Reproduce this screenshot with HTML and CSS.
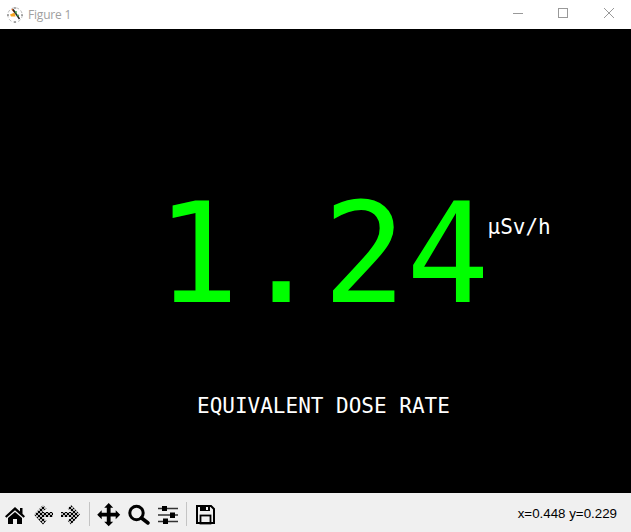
FILE: index.html
```html
<!DOCTYPE html>
<html lang="en">
<head>
<meta charset="utf-8">
<title>Figure 1</title>
<link rel="stylesheet" href="styles.css">
</head>
<body>
<div class="window">
  <header class="titlebar">
    <svg class="app-icon" viewBox="0 0 16 16" width="16" height="16">
      <circle cx="8" cy="8" r="7.2" fill="none" stroke="#bbb" stroke-width="1" stroke-dasharray="3 2"/>
      <path d="M8 0 V2 M8 14 V16 M0 8 H2 M14 8 H16" stroke="#666" stroke-width="1"/>
      <path d="M3 7.5 L7.5 5.5 L8.5 9.5 L4 9.5 Z" fill="#f5a623"/>
      <path d="M5 2 L7.5 5" stroke="#e8641c" stroke-width="1.6"/>
      <path d="M6 2.5 L12.5 12" stroke="#222" stroke-width="1.5"/>
      <path d="M9 4 V6.5" stroke="#3fa34d" stroke-width="1.4"/>
      <path d="M10 9 L12 8" stroke="#3fa34d" stroke-width="1.2"/>
    </svg>
    <span class="title">Figure 1</span>
    <div class="controls">
      <svg class="ctl" viewBox="0 0 45 29" width="45" height="29"><path d="M17 13.5 H27" stroke="#999" fill="none"/></svg>
      <svg class="ctl" viewBox="0 0 45 29" width="45" height="29"><rect x="17.5" y="8.5" width="9" height="9" stroke="#999" fill="none"/></svg>
      <svg class="ctl" viewBox="0 0 45 29" width="45" height="29"><path d="M18 8 L28 18 M28 8 L18 18" stroke="#999" fill="none"/></svg>
    </div>
  </header>
  <main class="canvas">
    <div class="reading">
      <span class="value">1.24</span>
      <span class="unit">µSv/h</span>
    </div>
    <div class="label">EQUIVALENT DOSE RATE</div>
  </main>
  <footer class="toolbar">
    <div class="tools nav">
      <svg class="tool" viewBox="0 0 24 24" width="24" height="24"><path d="M12 4 L17 8.5 V5 H19.5 V10.8 L22 13.3 L20.6 14.8 L12 7.3 L3.4 14.8 L2 13.3 Z M12 9 L19 15 V21 H14 V16 H10 V21 H5 V15 Z" fill="#000"/></svg>
      <svg class="tool" viewBox="0 0 24 24" width="24" height="24">
        <defs><pattern id="dither" width="4" height="4" patternUnits="userSpaceOnUse"><rect width="4" height="4" fill="#bbb"/><rect width="2" height="2" fill="#000"/><rect x="2" y="2" width="2" height="2" fill="#000"/></pattern></defs>
        <path d="M4 11.5 L13 2 L16.5 5.5 L12 9 H23 V14 H12 L16.5 17.5 L13 21.5 Z" fill="url(#dither)"/>
      </svg>
      <svg class="tool" viewBox="0 0 24 24" width="24" height="24"><path d="M23 11.5 L14 2 L10.5 5.5 L15 9 H4 V14 H15 L10.5 17.5 L14 21.5 Z" fill="url(#dither)"/></svg>
    </div>
    <span class="sep first"></span>
    <div class="tools view">
      <svg class="tool" viewBox="0 0 24 24" width="24" height="24"><path d="M11.7 0 L16.2 4.7 H13.6 V9.8 H18.7 V7.2 L23.2 11.7 L18.7 16.2 V13.6 H13.6 V18.7 H16.2 L11.7 23.2 L7.2 18.7 H9.8 V13.6 H4.7 V16.2 L0.2 11.7 L4.7 7.2 V9.8 H9.8 V4.7 H7.2 Z" fill="#000"/></svg>
      <svg class="tool" viewBox="0 0 24 24" width="24" height="24"><circle cx="9.5" cy="10" r="6.7" fill="none" stroke="#000" stroke-width="3"/><path d="M14.5 15 L21 20" stroke="#000" stroke-width="3.6" stroke-linecap="round"/></svg>
      <svg class="tool" viewBox="0 0 24 24" width="24" height="24"><path d="M1 5.5 H21 M1 12 H21 M1 18.5 H21" stroke="#333" stroke-width="1.5"/><rect x="5" y="3" width="5" height="5" fill="#000"/><rect x="13" y="9.5" width="5" height="5.5" fill="#000"/><rect x="6" y="15.5" width="5" height="5.5" fill="#000"/></svg>
    </div>
    <span class="sep second"></span>
    <svg class="tool" viewBox="0 0 24 24" width="24" height="24"><path d="M4 3 H18 L21 6 V20 H4 Z" fill="none" stroke="#000" stroke-width="2"/><rect x="7" y="3" width="10" height="5" fill="#000"/><rect x="13" y="4" width="2" height="3" fill="#f0f0f0"/><rect x="7.5" y="12.5" width="10" height="8" fill="none" stroke="#000" stroke-width="1.8"/></svg>
    <span class="coords">x=0.448 y=0.229</span>
  </footer>
</div>
</body>
</html>
```

FILE: styles.css
```css
* { box-sizing: border-box; }
html, body { margin: 0; padding: 0; }
body { width: 631px; height: 532px; overflow: hidden; background: #000; }
.window { width: 631px; height: 532px; display: flex; flex-direction: column; }

.titlebar { height: 29px; background: #fff; display: flex; align-items: center; padding-left: 7px; flex: none; }
.app-icon { display: block; margin-right: 5px; }
.title { font: 12px/29px "Open Sans", "Noto Sans", sans-serif; color: #a0a0a0; letter-spacing: -0.2px; }
.controls { margin-left: auto; display: flex; }
.ctl { display: block; }

.canvas { flex: 1; background: #000; display: flex; flex-direction: column; font-family: "DejaVu Sans Mono", monospace; }
.reading { display: flex; align-items: flex-start; padding: 145px 0 0 156px; height: 327px; }
.value { font-size: 138.5px; line-height: 161px; color: #0f0; }
.unit { font-size: 21px; line-height: 24px; color: #fff; margin: 41px 0 0 -2px; }
.label { font-size: 21px; line-height: 24px; color: #fff; padding-left: 197px; margin-top: 38px; }

.toolbar { height: 39px; flex: none; background: #f0f0f0; display: flex; align-items: center; padding: 5px 14px 0 3px; }
.tools { display: flex; align-items: center; }
.nav { gap: 3px; }
.view { gap: 6px; }
.tool { display: block; flex: none; }
.sep { width: 1px; height: 24px; background: #c4c4c4; margin-top: -2px; }
.sep.first { margin-left: 8px; margin-right: 7px; }
.sep.second { margin-left: 5px; margin-right: 6px; }
.coords { margin-left: auto; font: 13.33px/16px "Liberation Sans", Arial, sans-serif; color: #000; margin-top: -3px; }
```
